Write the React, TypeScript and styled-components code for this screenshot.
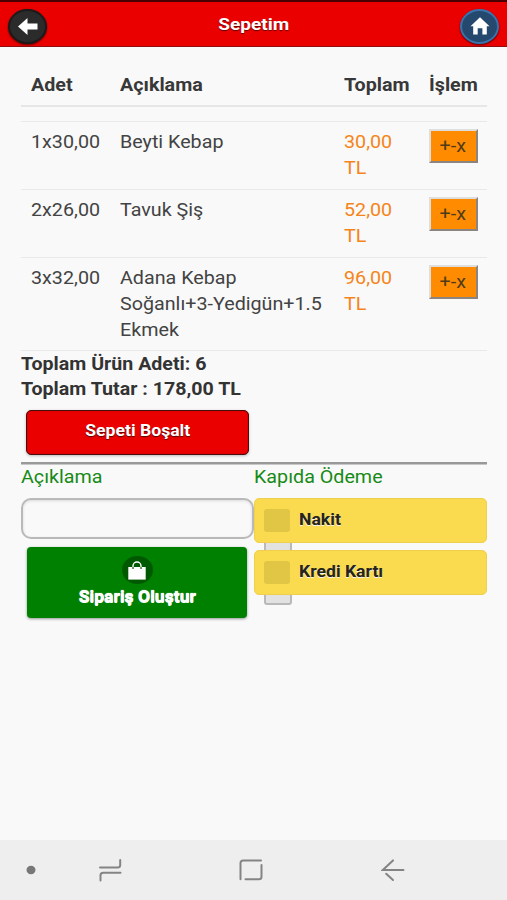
import React from "react";
import styled, { createGlobalStyle } from "styled-components";

const GlobalStyle = createGlobalStyle`
  * { box-sizing: border-box; }
  body {
    margin: 0;
    background: #f9f9f9;
    color: #434343;
    font-family: Roboto, "Liberation Sans", sans-serif;
  }
`;

const Screen = styled.div`
  width: 507px;
  height: 900px;
  display: flex;
  flex-direction: column;
  overflow: hidden;
`;

/* Wide-set label: the glyphs are stretched horizontally from one edge. */
const Label = styled.span<{ $center?: boolean; $stretch?: number }>`
  display: inline-block;
  white-space: nowrap;
  transform: scaleX(${(p) => p.$stretch ?? 1.12});
  transform-origin: ${(p) => (p.$center ? "center" : "left")} center;
`;

const Header = styled.header`
  height: 47px;
  flex: none;
  display: grid;
  grid-template-columns: 40px 1fr 40px;
  align-items: center;
  padding: 4px 7px 0 8px;
  background: #eb0000;
  border-top: 2px solid #4a0000;
  border-bottom: 1px solid #8e1010;
`;

const Title = styled.h1`
  margin: 0;
  padding-bottom: 5px;
  text-align: center;
  font-size: 17px;
  line-height: 24px;
  font-weight: 700;
  color: #fff;
  text-shadow: 0 1px 1px #600;
`;

const RoundButton = styled.button<{ $tone: "dark" | "blue" }>`
  width: 39px;
  height: 35px;
  padding: 0;
  display: flex;
  align-items: center;
  justify-content: center;
  border-radius: 50%;
  border: 2px solid ${(p) => (p.$tone === "dark" ? "#1b1b1b" : "#3873ad")};
  background: ${(p) => (p.$tone === "dark" ? "#2b2b2b" : "#25496e")};
  box-shadow: 0 1px 2px rgba(40, 0, 0, 0.75);
`;

const Content = styled.main`
  flex: 1;
  padding: 11px 20px 0 21px;
  display: flex;
  flex-direction: column;
`;

const Row = styled.div<{ $height: number }>`
  height: ${(p) => p.$height}px;
  flex: none;
  display: grid;
  grid-template-columns: 89.5px 223.5px 85px 1fr;
  padding: 7px 0 0 9.5px;
  border-bottom: 1px solid #e9e9e9;
  font-size: 17.6px;
  line-height: 26.2px;
`;

const HeadRow = styled(Row)`
  padding-top: 15px;
  line-height: 25px;
  font-weight: 700;
  color: #383838;
  border-bottom: 2px solid #e6e6e6;
`;

const Spacer = styled.div`
  height: 15px;
  flex: none;
  border-bottom: 1px solid #e9e9e9;
`;

const Price = styled.div`
  color: #f5851a;
`;

const EditButton = styled.button`
  width: 49px;
  height: 34px;
  margin: 0;
  padding: 0;
  background: #ff8c00;
  border: 2px solid;
  border-color: #dedede #8c8480 #8c8480 #dedede;
  color: #4f3b1c;
  font: 400 17.6px/26px Roboto, sans-serif;
`;

const Totals = styled.div`
  font-size: 17.6px;
  line-height: 25px;
  font-weight: 700;
  color: #333;
  height: 59px;
  padding-top: 1px;
  flex: none;
`;

const ClearButton = styled.button`
  width: 223px;
  height: 45px;
  flex: none;
  margin: 0 0 7px 5px;
  padding: 0 0 3px;
  border: 1.5px solid #4c0d0d;
  border-radius: 5px;
  background: #eb0000;
  box-shadow: 0 1px 3px rgba(0, 0, 0, 0.25), inset 0 0 1px #600;
  color: #fff;
  font: 700 16px/24px Roboto, sans-serif;
  text-shadow: 0 1px 1px #500;
`;

const Divider = styled.div`
  height: 3px;
  flex: none;
  background: #999;
  border-bottom: 1px solid #c8c8c8;
`;

const Checkout = styled.section`
  display: grid;
  grid-template-columns: 233px 233px;
`;

const FieldTitle = styled.div`
  height: 33px;
  line-height: 25px;
  font-size: 17.6px;
  color: #178a17;
`;

const NoteInput = styled.input`
  display: block;
  width: 233px;
  height: 41px;
  border: 2px solid #b9b9b9;
  border-radius: 10px;
  background: #f9f9f9;
  box-shadow: inset 0 1px 3px rgba(0, 0, 0, 0.12);
`;

const OrderButton = styled.button`
  width: 220px;
  height: 71px;
  margin: 8px 0 0 6px;
  padding: 9px 0 0;
  display: flex;
  flex-direction: column;
  align-items: center;
  border: 0;
  border-radius: 4px;
  background: #008000;
  box-shadow: 0 1px 3px rgba(0, 0, 0, 0.4);
  color: #fff;
  font: 700 16px/26px Roboto, sans-serif;
  text-shadow: 0 0 1px #fff, 0 1px 0 #fff;
`;

const BagBadge = styled.span`
  width: 31px;
  height: 28px;
  display: flex;
  align-items: center;
  justify-content: center;
  border-radius: 50%;
  background: #005900;
`;

const Option = styled.div`
  height: 52px;
  position: relative;
`;

const OptionLabel = styled.label`
  position: relative;
  height: 45px;
  display: flex;
  align-items: center;
  gap: 9px;
  padding: 0 0 3px 9px;
  border: 1px solid #efd04c;
  border-radius: 5px;
  background: #fada4e;
  color: #26231a;
  font-size: 16px;
  font-weight: 700;
  text-shadow: 0 1px 0 #f3f3f3;
`;

const CheckTile = styled.span`
  width: 26px;
  height: 23px;
  margin-top: 3px;
  border-radius: 3px;
  background: #e1c545;
`;

/* The native box peeks out from underneath the label. */
const NativeBox = styled.span`
  position: absolute;
  left: 10px;
  top: 29px;
  width: 28px;
  height: 26px;
  border: 2px solid #b9b9b9;
  border-radius: 3px;
  background: #e2e2e2;
`;

const NavBar = styled.nav`
  height: 60px;
  flex: none;
  display: grid;
  grid-template-columns: 61px 98px 184px 100px 1fr;
  align-items: center;
  justify-items: center;
  background: #eee;
`;

const BackIcon = () => (
  <svg width="22" height="19" viewBox="0 0 22 19" fill="#fff">
    <path d="M1 9.5 10.5 1v5.5H20.5v6H10.5V18z" />
  </svg>
);

const HomeIcon = () => (
  <svg width="20" height="18" viewBox="0 0 20 18" fill="#fff">
    <path d="M10 0.3 19.5 9.3H16.8V17.5H12.4V11.2H7.7V17.5H3.2V9.3H0.5z" />
  </svg>
);

const BagIcon = () => (
  <svg width="18" height="19" viewBox="0 0 18 19">
    <path d="M0.3 6h17.4v12.6H0.3z" fill="#fff" />
    <path d="M5 8.3V5a4 4 0 0 1 8 0v3.3" fill="none" stroke="#fff" strokeWidth="1.4" />
    <path d="M5 6v2M13 6v2" stroke="#005900" strokeWidth="1.2" />
  </svg>
);

const strokes = {
  fill: "none",
  stroke: "#848484",
  strokeWidth: 2,
  strokeLinecap: "round" as const,
};

const DotIcon = () => (
  <svg width="10" height="10" viewBox="0 0 10 10">
    <ellipse cx="5" cy="5" rx="4.5" ry="4.2" fill="#777" />
  </svg>
);

const RecentsIcon = () => (
  <svg width="24" height="24" viewBox="0 0 24 24" {...strokes}>
    <path d="M2 9.5H19.5Q22.2 9.5 22.2 7V2" />
    <path d="M22.5 14.7H5.3Q2.5 14.7 2.5 17.2V22.4" />
  </svg>
);

const HomeNavIcon = () => (
  <svg width="24" height="24" viewBox="0 0 24 24" {...strokes}>
    <path d="M1.5 21.2V5Q1.5 2.5 4.2 2.5H22" />
    <path d="M22.5 7V18.7Q22.5 21.3 19.8 21.3H6.5" />
  </svg>
);

const BackNavIcon = () => (
  <svg width="24" height="24" viewBox="0 0 24 24" {...strokes}>
    <path d="M22.5 12H1.8L12 2.4" />
    <path d="M5.2 15.7 12 22" />
  </svg>
);

const items = [
  { count: "1x30,00", lines: ["Beyti Kebap"], price: "30,00", height: 68 },
  { count: "2x26,00", lines: ["Tavuk Şiş"], price: "52,00", height: 68 },
  {
    count: "3x32,00",
    lines: ["Adana Kebap", "Soğanlı+3-Yedigün+1.5", "Ekmek"],
    price: "96,00",
    height: 93,
  },
];

const Line = styled.div``;

export default function App() {
  return (
    <>
      <GlobalStyle />
      <Screen>
        <Header>
          <RoundButton $tone="dark" aria-label="Geri"><BackIcon /></RoundButton>
          <Title><Label $center>Sepetim</Label></Title>
          <RoundButton $tone="blue" aria-label="Ana sayfa"><HomeIcon /></RoundButton>
        </Header>
        <Content>
          <HeadRow $height={49}>
            <div><Label>Adet</Label></div>
            <div><Label>Açıklama</Label></div>
            <div><Label>Toplam</Label></div>
            <div><Label>İşlem</Label></div>
          </HeadRow>
          <Spacer />
          {items.map((item) => (
            <Row key={item.count} $height={item.height}>
              <div><Label>{item.count}</Label></div>
              <div>
                {item.lines.map((line) => (
                  <Line key={line}><Label>{line}</Label></Line>
                ))}
              </div>
              <Price>
                <Line><Label>{item.price}</Label></Line>
                <Line><Label>TL</Label></Line>
              </Price>
              <EditButton><Label $center>+-x</Label></EditButton>
            </Row>
          ))}
          <Totals>
            <Line><Label $stretch={1.115}>Toplam Ürün Adeti: 6</Label></Line>
            <Line><Label $stretch={1.115}>Toplam Tutar : 178,00 TL</Label></Line>
          </Totals>
          <ClearButton><Label $center $stretch={1.1}>Sepeti Boşalt</Label></ClearButton>
          <Divider />
          <Checkout>
            <div>
              <FieldTitle><Label>Açıklama</Label></FieldTitle>
              <NoteInput aria-label="Açıklama" />
              <OrderButton>
                <BagBadge><BagIcon /></BagBadge>
                <Label $center $stretch={1.1}>Sipariş Oluştur</Label>
              </OrderButton>
            </div>
            <div>
              <FieldTitle><Label>Kapıda Ödeme</Label></FieldTitle>
              {["Nakit", "Kredi Kartı"].map((name) => (
                <Option key={name}>
                  <NativeBox />
                  <OptionLabel>
                    <CheckTile />
                    <Label $stretch={1.1}>{name}</Label>
                  </OptionLabel>
                </Option>
              ))}
            </div>
          </Checkout>
        </Content>
        <NavBar>
          <DotIcon />
          <RecentsIcon />
          <HomeNavIcon />
          <BackNavIcon />
        </NavBar>
      </Screen>
    </>
  );
}
